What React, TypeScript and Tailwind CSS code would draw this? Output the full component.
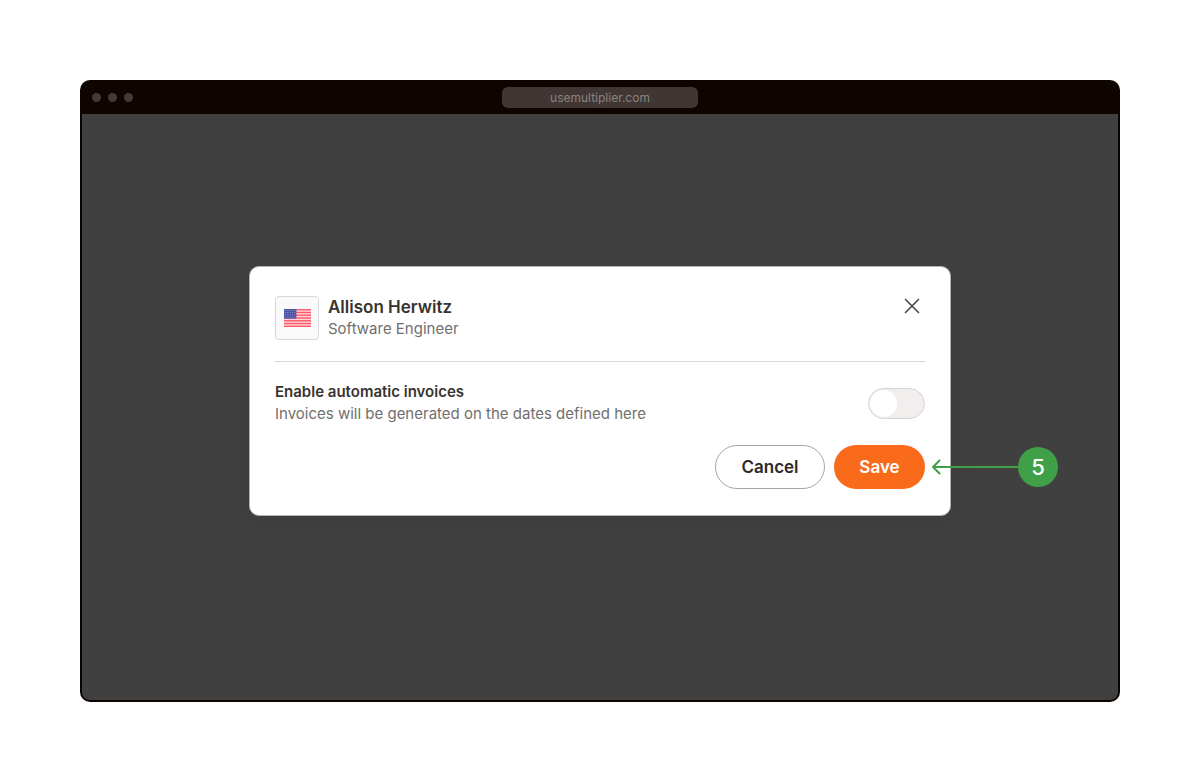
import React, { useState } from 'react';

interface SwitchProps {
  id: string;
  checked: boolean;
  onChange: (checked: boolean) => void;
}

const FlagUS = () => (
  <svg viewBox="0 0 27 18" className="h-[18px] w-[27px]" role="img" aria-label="United States">
    <rect width="27" height="18" fill="#ffd3d7" />
    {[0, 1, 2, 3, 4, 5, 6].map((row) => (
      <rect key={row} y={row * 2.77} width="27" height="1.4" fill="#ff5c69" />
    ))}
    <rect width="12.4" height="9.6" fill="#4a53a6" />
    {[0, 1, 2, 3].map((row) =>
      [0, 1, 2, 3, 4].map((col) => (
        <circle key={`${row}-${col}`} cx={1.5 + col * 2.35} cy={1.4 + row * 2.2} r="0.5" fill="#9fa5da" />
      ))
    )}
  </svg>
);

const CloseIcon = () => (
  <svg viewBox="0 0 16 16" className="h-4 w-4" fill="none" stroke="#4b4543" strokeWidth="1.6" strokeLinecap="round">
    <path d="M1.5 1.5l13 13M14.5 1.5l-13 13" />
  </svg>
);

const Switch: React.FC<SwitchProps> = ({ id, checked, onChange }) => (
  <input
    id={id}
    type="checkbox"
    role="switch"
    checked={checked}
    onChange={(e) => onChange(e.target.checked)}
    className="flex h-[31px] w-[57px] shrink-0 cursor-pointer appearance-none items-center rounded-full border border-[#d6d4d3] bg-[#f2eeed] px-px before:h-[27px] before:w-[27px] before:rounded-full before:bg-white before:content-[''] checked:justify-end checked:bg-[#f96a1b]"
  />
);

// Numbered marker pointing at the element it is placed in
const StepMarker = ({ step }: { step: number }) => (
  <div className="absolute top-1/2 left-full ml-[7px] flex -translate-y-1/2 items-center">
    <svg viewBox="0 0 86 16" className="h-4 w-[86px]" fill="none" stroke="#3fa047" strokeWidth="2">
      <path d="M1 8h85" />
      <path d="M7.5 1.5L1 8l6.5 6.5" strokeLinecap="round" strokeLinejoin="round" />
    </svg>
    <span className="flex h-10 w-10 items-center justify-center rounded-full bg-[#3fa047] text-[22px] font-medium text-white">
      {step}
    </span>
  </div>
);

const InvoiceDialog = () => {
  const [enabled, setEnabled] = useState(false);

  return (
    <div
      role="dialog"
      aria-labelledby="employee-name"
      className="w-full max-w-[702px] rounded-[10px] border border-[#b5b3b2] bg-white px-[25px] pt-[29px] pb-[26px] shadow-[0_4px_24px_rgba(0,0,0,0.08)]"
    >
      <div className="flex items-start border-b border-[#d8d8d8] pb-[21px]">
        <div className="flex h-11 w-11 items-center justify-center rounded border border-[#d8d8d8] bg-[#fafafa]">
          <FlagUS />
        </div>
        <div className="ml-[9px] flex-1">
          <h2 id="employee-name" className="text-[17px] leading-[22px] font-semibold text-[#38332f]">
            Allison Herwitz
          </h2>
          <p className="text-[15px] leading-[22px] text-[#716f6e]">Software Engineer</p>
        </div>
        <button type="button" aria-label="Close" className="mt-[2px] mr-[5px] cursor-pointer">
          <CloseIcon />
        </button>
      </div>

      <div className="flex items-center justify-between pt-[19px]">
        <label htmlFor="auto-invoices" className="text-[15px] leading-[22px] text-[#716f6e]">
          <span className="block font-semibold text-[#38332f]">Enable automatic invoices</span>
          Invoices will be generated on the dates defined here
        </label>
        <Switch id="auto-invoices" checked={enabled} onChange={setEnabled} />
      </div>

      <div className="mt-5 flex justify-end gap-[9px]">
        <button
          type="button"
          className="h-11 w-[110px] rounded-full border border-[#a9a7a6] bg-white pt-[2px] text-[17px] font-semibold text-[#2d2926]"
        >
          Cancel
        </button>
        <div className="relative">
          <button
            type="button"
            className="h-11 w-[91px] rounded-full bg-[#f96a1b] pt-[2px] text-[17px] font-semibold text-white"
          >
            Save
          </button>
          <StepMarker step={5} />
        </div>
      </div>
    </div>
  );
};

const App = () => {
  return (
    <div className="flex min-h-screen flex-col bg-white p-20 font-['Inter',sans-serif]">
      <div className="flex flex-1 flex-col rounded-[10px] bg-[#0e0500]">
        <header className="grid h-[34px] grid-cols-3 items-center px-3">
          <div className="flex gap-[7px]">
            <span className="h-[9px] w-[9px] rounded-full bg-[#433937]" />
            <span className="h-[9px] w-[9px] rounded-full bg-[#433937]" />
            <span className="h-[9px] w-[9px] rounded-full bg-[#433937]" />
          </div>
          <div className="w-[196px] justify-self-center rounded-md bg-[#403735] text-center text-xs leading-[21px] text-[#8a8280]">
            usemultiplier.com
          </div>
        </header>
        <main className="mx-[2px] mb-[2px] flex flex-1 items-start justify-center rounded-b-lg bg-[#404040] px-6 pt-[152px] pb-16">
          <InvoiceDialog />
        </main>
      </div>
    </div>
  );
};

export default App;
